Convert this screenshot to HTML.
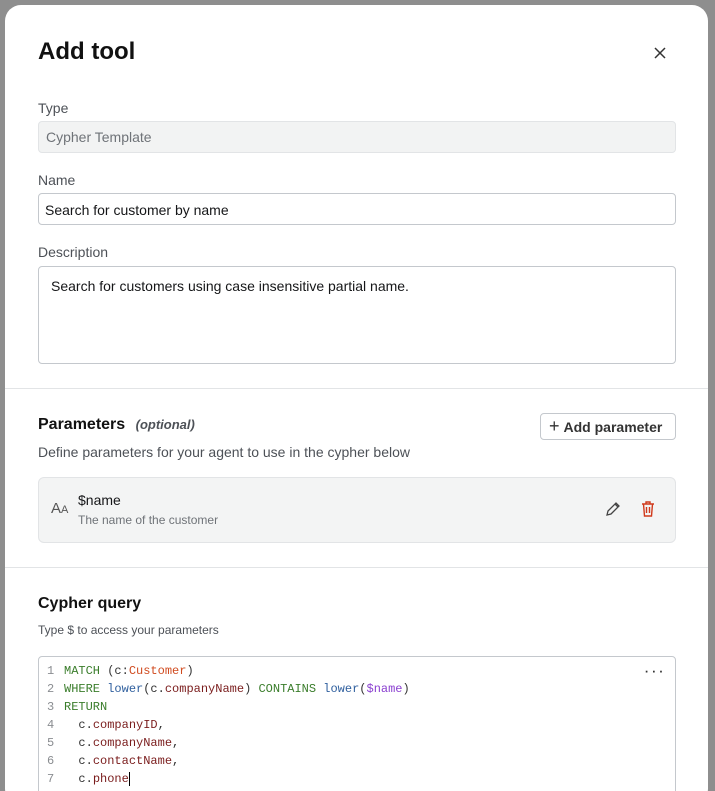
<!DOCTYPE html>
<html style="height:791px;overflow:hidden"><head><style>
body{margin:0;width:715px;height:791px;overflow:hidden;background:#8e8e8e;font-family:"Liberation Sans",sans-serif;position:relative;}
.m{position:absolute;left:5px;top:5px;width:703px;height:800px;background:#fff;border-radius:16px;overflow:hidden;}
.a{position:absolute;}
.lbl{font-size:14px;color:#4d5157;}
.inp{position:absolute;left:33px;width:638px;border:1px solid #c4c8cd;border-radius:4px;font-size:14px;color:#151618;box-sizing:border-box;}
.hr{position:absolute;left:0;width:703px;height:1px;background:#e2e4e6;}
.code{font-family:"Liberation Mono",monospace;font-size:12px;line-height:18px;color:#333;white-space:pre;}
.n{color:#8a8d91;display:inline-block;width:17px;}
.k{color:#3a7d2b}.f{color:#2f5f9e}.p{color:#7a1c1c}.l{color:#d04a1e}.v{color:#8a3fd0}
</style></head><body>
<div class="m">
<div class="a" style="left:33px;top:33px;font-size:24px;font-weight:bold;color:#111">Add tool</div>
<svg class="a" style="left:648px;top:41px" width="14" height="14" viewBox="0 0 14 14"><path d="M2 2L12 12M12 2L2 12" stroke="#333" stroke-width="1.5"/></svg>
<div class="a lbl" style="left:33px;top:95px">Type</div>
<div class="inp" style="top:116px;height:32px;background:#f2f3f3;border-color:#e2e4e6;color:#6f7378;padding:7px 7px">Cypher Template</div>
<div class="a lbl" style="left:33px;top:167px">Name</div>
<div class="inp" style="top:188px;height:32px;padding:8px 6px">Search for customer by name</div>
<div class="a lbl" style="left:33px;top:239px">Description</div>
<div class="inp" style="top:261px;height:98px;padding:11px 12px">Search for customers using case insensitive partial name.</div>
<div class="hr" style="top:383px"></div>
<div class="a" style="left:33px;top:411px;font-size:16px;font-weight:bold;color:#111">Parameters <span style="font-size:13px;font-style:italic;color:#4d5157;margin-left:6px">(optional)</span></div>
<div class="a" style="left:535px;top:408px;width:136px;height:27px;border:1px solid #c4c8cd;border-radius:4px;font-size:14px;font-weight:bold;color:#333;box-sizing:border-box;padding:5px 0 0 8px"><span style="font-weight:normal;font-size:18px;line-height:10px;margin-right:4px">+</span>Add parameter</div>
<div class="a lbl" style="left:33px;top:439px">Define parameters for your agent to use in the cypher below</div>
<div class="a" style="left:33px;top:472px;width:638px;height:66px;background:#f3f4f4;border:1px solid #e2e4e6;border-radius:6px;box-sizing:border-box"></div>
<div class="a" style="left:46px;top:495px;font-size:15px;color:#555">A<span style="font-size:11px">A</span></div>
<div class="a" style="left:73px;top:487px;font-size:14px;color:#151618">$name</div>
<div class="a" style="left:73px;top:508px;font-size:12px;color:#6f7378">The name of the customer</div>
<svg class="a" style="left:600px;top:496px" width="16" height="16" viewBox="0 0 16 16"><path d="M2 14l1-4 8-8 3 3-8 8z M10 3l3 3" fill="none" stroke="#444" stroke-width="1.3"/></svg>
<svg class="a" style="left:636px;top:496px" width="14" height="16" viewBox="0 0 14 16"><path d="M1 3h12M5 3V1h4v2M2.5 3l1 12h7l1-12M5.5 6v6M8.5 6v6" fill="none" stroke="#d0391b" stroke-width="1.4"/></svg>
<div class="hr" style="top:562px"></div>
<div class="a" style="left:33px;top:590px;font-size:16px;font-weight:bold;color:#111">Cypher query</div>
<div class="a" style="left:33px;top:618px;font-size:12px;color:#4d5157">Type $ to access your parameters</div>
<div class="a code" style="left:33px;top:651px;width:638px;height:160px;border:1px solid #c4c8cd;border-radius:4px;box-sizing:border-box;padding:5px 0 0 8px"><div><span class="n">1</span><span class="k">MATCH</span> (c:<span class="l">Customer</span>)</div><div><span class="n">2</span><span class="k">WHERE</span> <span class="f">lower</span>(c.<span class="p">companyName</span>) <span class="k">CONTAINS</span> <span class="f">lower</span>(<span class="v">$name</span>)</div><div><span class="n">3</span><span class="k">RETURN</span></div><div><span class="n">4</span>  c.<span class="p">companyID</span>,</div><div><span class="n">5</span>  c.<span class="p">companyName</span>,</div><div><span class="n">6</span>  c.<span class="p">contactName</span>,</div><div><span class="n">7</span>  c.<span class="p">phone</span><span style="border-left:1px solid #000"></span></div><div class="a" style="left:604px;top:6px;font-weight:bold;color:#333">···</div></div>
</div>
</body></html>
